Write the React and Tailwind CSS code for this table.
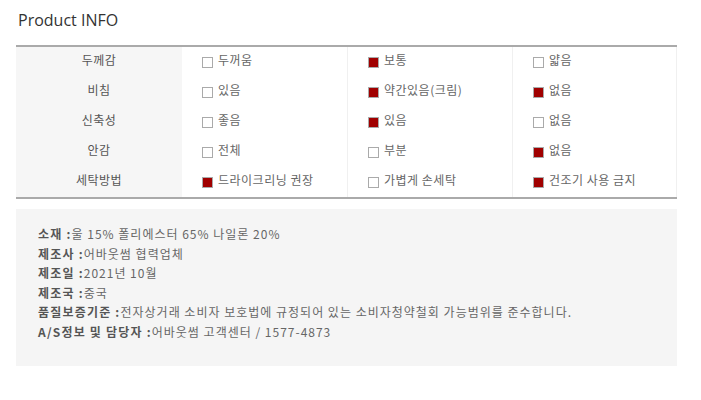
import React from 'react';

const rows = [
  { label: '두께감', opts: [['두꺼움', false], ['보통', true], ['얇음', false]] },
  { label: '비침', opts: [['있음', false], ['약간있음(크림)', true], ['없음', true]] },
  { label: '신축성', opts: [['좋음', false], ['있음', true], ['없음', false]] },
  { label: '안감', opts: [['전체', false], ['부분', false], ['없음', true]] },
  { label: '세탁방법', opts: [['드라이크리닝 권장', true], ['가볍게 손세탁', false], ['건조기 사용 금지', true]] },
];

const info = [
  ['소재 :', '울 15% 폴리에스터 65% 나일론 20%'],
  ['제조사 :', '어바웃썸 협력업체'],
  ['제조일 :', '2021년 10월'],
  ['제조국 :', '중국'],
  ['품질보증기준 :', '전자상거래 소비자 보호법에 규정되어 있는 소비자청약철회 가능범위를 준수합니다.'],
  ['A/S정보 및 담당자 :', '어바웃썸 고객센터 / 1577-4873'],
];

const kr = "font-['Noto_Sans_CJK_KR',sans-serif]";

const Check = ({ on }) => (
  <span
    className={`inline-block w-[11px] h-[11px] border border-[#aaa] shrink-0 ${on ? 'bg-[#a00000]' : 'bg-white'}`}
  />
);

const App = () => {
  return (
    <div className={`w-[701px] h-[400px] bg-white px-4 ${kr}`}>
      <h2 className="pt-[8px] pl-[2px] h-[45px] text-[16px] leading-[24px] text-[#333] font-['Open_Sans',sans-serif]">
        Product INFO
      </h2>

      <div className="w-[661px] border-t-2 border-b-2 border-[#aaa] grid grid-cols-[166px_165px_165px_165px]">
        {rows.map((r) => (
          <React.Fragment key={r.label}>
            <div className="h-[30px] bg-[#f6f6f6] flex items-center justify-center text-[12px] text-[#555] tracking-[0.5px]">
              <span className="leading-none -mt-[4px]">{r.label}</span>
            </div>
            {r.opts.map(([txt, on], i) => (
              <div
                key={i}
                className={`h-[30px] flex items-center gap-[5px] pl-5 text-[12px] text-[#666] tracking-[0.5px] ${i === 1 ? 'border-l border-[#f0f0f0]' : ''} ${i === 2 ? 'border-l border-r border-[#f0f0f0]' : ''}`}
              >
                <Check on={on} />
                <span className="leading-none -mt-[4px]">{txt}</span>
              </div>
            ))}
          </React.Fragment>
        ))}
      </div>

      <div className="w-[661px] mt-[10px] h-[157px] bg-[#f5f5f5] pl-[22px] pt-[15px] text-[12px] leading-[19.5px]">
        {info.map(([k, v]) => (
          <p key={k} className="whitespace-nowrap">
            <span className="font-bold text-[#555] tracking-[1.2px]">{k}</span>
            <span className="text-[#666] tracking-[1px]">{v}</span>
          </p>
        ))}
      </div>
    </div>
  );
};

export default App;
